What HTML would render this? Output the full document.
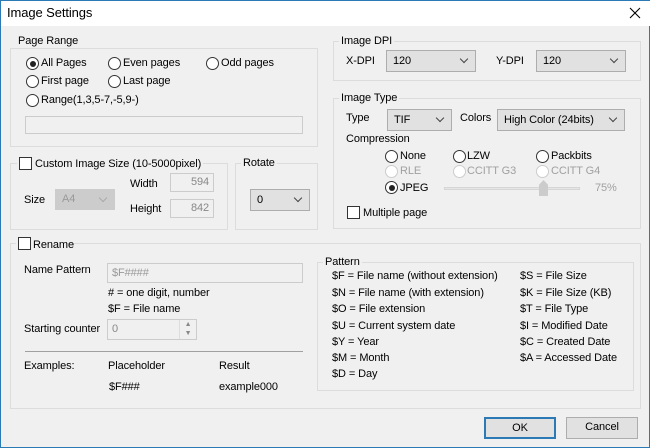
<!DOCTYPE html>
<html><head><meta charset="utf-8"><style>
*{box-sizing:border-box;margin:0;padding:0}
body{width:650px;height:448px;background:#f0f0f0;font-family:"Liberation Sans",sans-serif;font-size:11px;letter-spacing:-0.1px;color:#000;position:relative;overflow:hidden;border-left:1px solid #2b79b5;border-right:1px solid #2b79b5;border-bottom:1px solid #2b79b5}
.a{position:absolute;white-space:nowrap;line-height:14px}
.title{position:absolute;left:0;top:0;width:650px;height:26px;background:#fff;border-top:1px solid #2b79b5}
.g{position:absolute;border:1px solid #dcdcdc}
.lbl{position:absolute;background:#f0f0f0;padding:0 2px;line-height:14px;white-space:nowrap}
.r{position:absolute;width:13px;height:13px;border:1px solid #333;border-radius:50%;background:#fff}
.r.on::after{content:"";position:absolute;left:2.5px;top:2.5px;width:6px;height:6px;border-radius:50%;background:#222}
.r.dis{border-color:#ccc}
.cb{position:absolute;width:13px;height:13px;border:1px solid #333;background:#fff}
.f{position:absolute;border:1px solid #ccc;background:#f0f0f0;color:#888;line-height:16px;padding:0 4px}
.c{position:absolute;border:1px solid #adadad;background:#e1e1e1;line-height:18px;padding:0 6px}
.c::after{content:"";position:absolute;right:8px;top:5px;width:5px;height:5px;border-right:1px solid #444;border-bottom:1px solid #444;transform:rotate(45deg)}
.c.dis{color:#999;border-color:#ccc;background:#ccc}
.c.dis::after{border-color:#aaa}
.gr{color:#a0a0a0}
.btn{position:absolute;border:1px solid #adadad;background:#e1e1e1;text-align:center;line-height:19px}
</style></head><body>
<div class="title"></div>
<div class="a" style="left:6px;top:5px;font-size:13px;line-height:16px">Image Settings</div>
<svg style="position:absolute;left:628px;top:7px" width="12" height="12"><path d="M1 1L11 11M11 1L1 11" stroke="#000" stroke-width="1.1"/></svg>

<div class="g" style="left:9px;top:48px;width:308px;height:99px"></div>
<div class="lbl" style="left:15px;top:34px">Page Range</div>
<div class="r on" style="left:25px;top:57px"></div><div class="a" style="left:40px;top:56px">All Pages</div>
<div class="r" style="left:107px;top:57px"></div><div class="a" style="left:122px;top:56px">Even pages</div>
<div class="r" style="left:205px;top:57px"></div><div class="a" style="left:220px;top:56px">Odd pages</div>
<div class="r" style="left:25px;top:75px"></div><div class="a" style="left:40px;top:74px">First page</div>
<div class="r" style="left:107px;top:75px"></div><div class="a" style="left:122px;top:74px">Last page</div>
<div class="r" style="left:25px;top:94px"></div><div class="a" style="left:40px;top:93px">Range(1,3,5-7,-5,9-)</div>
<div class="f" style="left:24px;top:116px;width:278px;height:18px"></div>

<div class="g" style="left:9px;top:163px;width:218px;height:67px"></div>
<div class="lbl" style="left:16px;top:156px;width:186px">&nbsp;</div>
<div class="cb" style="left:18px;top:157px"></div><div class="a" style="left:34px;top:157px">Custom Image Size (10-5000pixel)</div>
<div class="a" style="left:23px;top:193px">Size</div>
<div class="c dis" style="left:54px;top:189px;width:60px;height:21px">A4</div>
<div class="a" style="left:129px;top:177px">Width</div>
<div class="f" style="left:169px;top:173px;width:44px;height:19px;text-align:right">594</div>
<div class="a" style="left:129px;top:202px">Height</div>
<div class="f" style="left:169px;top:199px;width:44px;height:19px;text-align:right">842</div>

<div class="g" style="left:234px;top:163px;width:83px;height:67px"></div>
<div class="lbl" style="left:240px;top:156px">Rotate</div>
<div class="c" style="left:249px;top:189px;width:60px;height:22px;line-height:20px">0</div>

<div class="g" style="left:332px;top:41px;width:308px;height:40px"></div>
<div class="lbl" style="left:338px;top:34px">Image DPI</div>
<div class="a" style="left:345px;top:54px">X-DPI</div>
<div class="c" style="left:385px;top:50px;width:90px;height:22px;line-height:20px">120</div>
<div class="a" style="left:495px;top:54px">Y-DPI</div>
<div class="c" style="left:535px;top:50px;width:90px;height:22px;line-height:20px">120</div>

<div class="g" style="left:332px;top:98px;width:308px;height:131px"></div>
<div class="lbl" style="left:338px;top:91px">Image Type</div>
<div class="a" style="left:345px;top:111px">Type</div>
<div class="c" style="left:386px;top:109px;width:65px;height:22px;line-height:20px">TIF</div>
<div class="a" style="left:459px;top:111px">Colors</div>
<div class="c" style="left:496px;top:109px;width:128px;height:22px;line-height:20px">High Color (24bits)</div>
<div class="a" style="left:345px;top:132px">Compression</div>
<div class="r" style="left:384px;top:150px"></div><div class="a" style="left:399px;top:149px">None</div>
<div class="r" style="left:452px;top:150px"></div><div class="a" style="left:466px;top:149px">LZW</div>
<div class="r" style="left:535px;top:150px"></div><div class="a" style="left:550px;top:149px">Packbits</div>
<div class="r dis" style="left:384px;top:165px"></div><div class="a gr" style="left:399px;top:164px">RLE</div>
<div class="r dis" style="left:452px;top:165px"></div><div class="a gr" style="left:466px;top:164px">CCITT G3</div>
<div class="r dis" style="left:535px;top:165px"></div><div class="a gr" style="left:550px;top:164px">CCITT G4</div>
<div class="r on" style="left:384px;top:181px"></div><div class="a" style="left:399px;top:181px">JPEG</div>
<div style="position:absolute;left:443px;top:187px;width:136px;height:3px;background:#e6e6e6;border:1px solid #d6d6d6"></div>
<div style="position:absolute;left:538px;top:180px;width:9px;height:16px;background:#ccc;clip-path:polygon(0 30%,50% 0,100% 30%,100% 100%,0 100%)"></div>
<div class="a gr" style="left:594px;top:181px">75%</div>
<div class="cb" style="left:346px;top:206px"></div><div class="a" style="left:362px;top:206px">Multiple page</div>

<div class="g" style="left:9px;top:243px;width:631px;height:166px"></div>
<div class="lbl" style="left:15px;top:236px;width:50px">&nbsp;</div>
<div class="cb" style="left:17px;top:237px"></div><div class="a" style="left:32px;top:238px">Rename</div>
<div class="a" style="left:23px;top:263px">Name Pattern</div>
<div class="f" style="left:106px;top:263px;width:196px;height:20px;line-height:18px;color:#999">$F####</div>
<div class="a" style="left:107px;top:286px"># = one digit, number</div>
<div class="a" style="left:107px;top:302px">$F = File name</div>
<div class="a" style="left:23px;top:322px">Starting counter</div>
<div class="f" style="left:106px;top:319px;width:90px;height:21px;line-height:19px">0</div>
<div style="position:absolute;left:178px;top:320px;width:17px;height:19px;border-left:1px solid #ddd;font-size:7px;color:#888;text-align:center;line-height:9px">▲<br>▼</div>
<div style="position:absolute;left:24px;top:351px;width:278px;height:1px;background:#a0a0a0"></div>
<div class="a" style="left:23px;top:359px">Examples:</div>
<div class="a" style="left:107px;top:359px">Placeholder</div>
<div class="a" style="left:218px;top:359px">Result</div>
<div class="a" style="left:108px;top:380px">$F###</div>
<div class="a" style="left:218px;top:380px">example000</div>

<div class="g" style="left:316px;top:262px;width:317px;height:129px"></div>
<div class="lbl" style="left:322px;top:255px">Pattern</div>
<div class="a" style="left:331px;top:269px">$F = File name (without extension)</div>
<div class="a" style="left:331px;top:286px">$N = File name (with extension)</div>
<div class="a" style="left:331px;top:302px">$O = File extension</div>
<div class="a" style="left:331px;top:319px">$U = Current system date</div>
<div class="a" style="left:331px;top:335px">$Y = Year</div>
<div class="a" style="left:331px;top:351px">$M = Month</div>
<div class="a" style="left:331px;top:367px">$D = Day</div>
<div class="a" style="left:519px;top:269px">$S = File Size</div>
<div class="a" style="left:519px;top:286px">$K = File Size (KB)</div>
<div class="a" style="left:519px;top:302px">$T = File Type</div>
<div class="a" style="left:519px;top:319px">$I = Modified Date</div>
<div class="a" style="left:519px;top:335px">$C = Created Date</div>
<div class="a" style="left:519px;top:351px">$A = Accessed Date</div>

<div class="btn" style="left:483px;top:417px;width:72px;height:22px;border:2px solid #2b79b5;line-height:18px">OK</div>
<div class="btn" style="left:565px;top:417px;width:72px;height:22px">Cancel</div>
</body></html>
